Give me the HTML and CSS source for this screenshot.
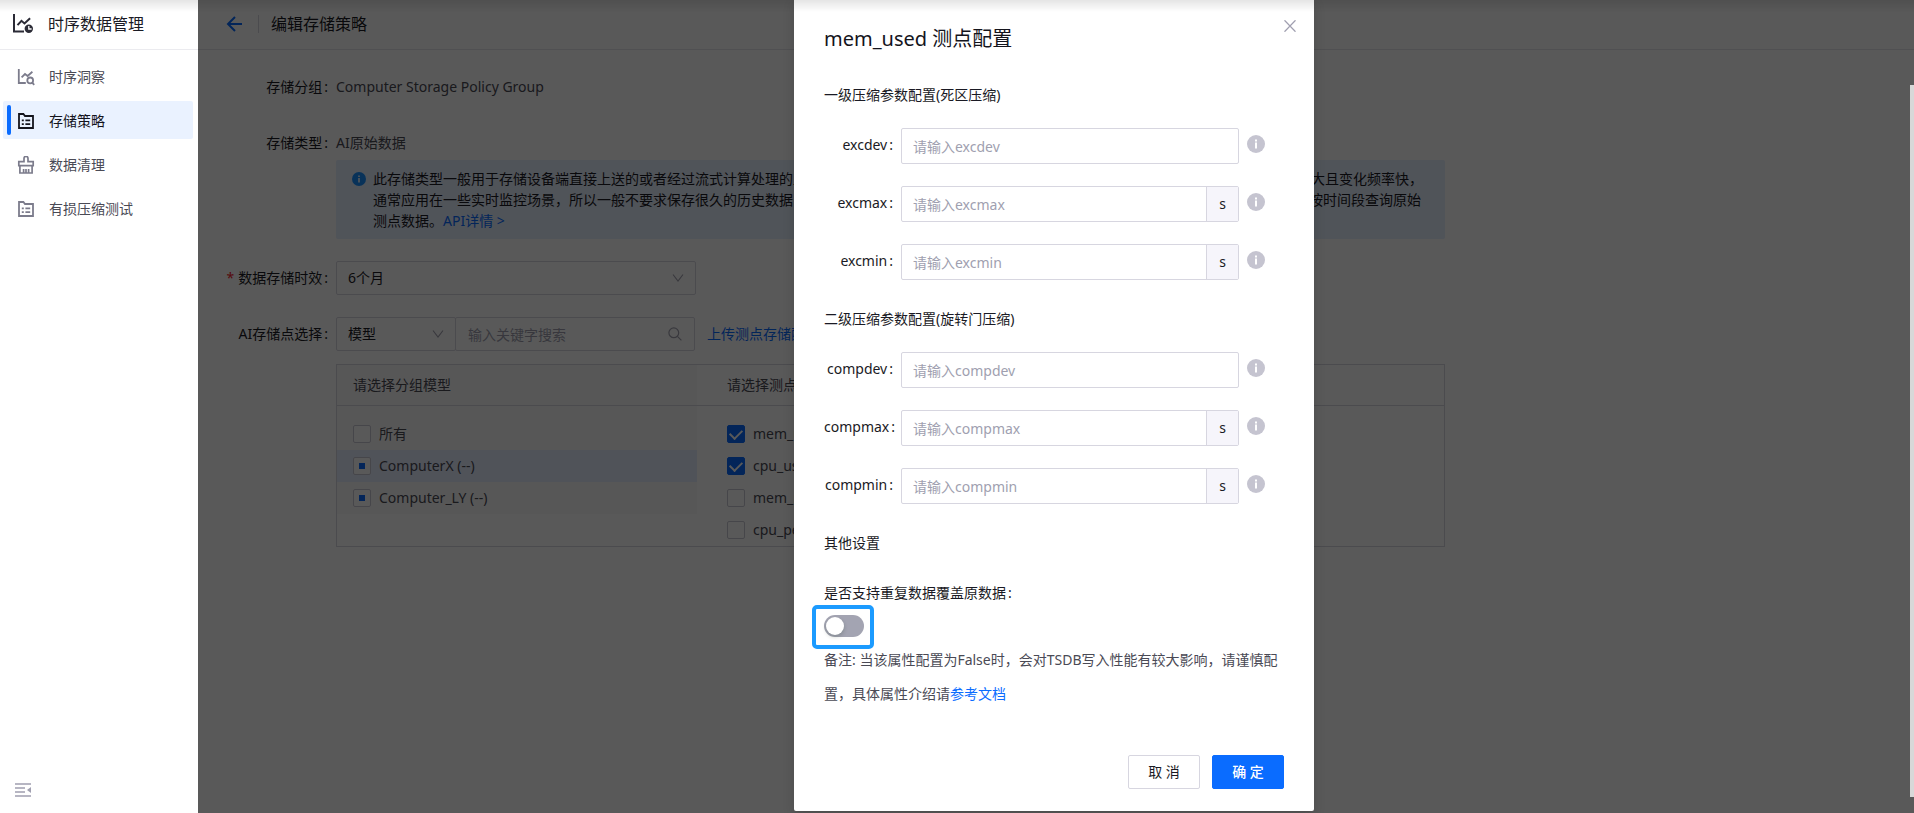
FILE: index.html
```html
<!DOCTYPE html>
<html lang="zh-CN">
<head>
<meta charset="utf-8">
<title>时序数据管理</title>
<link rel="stylesheet" href="styles.css">
</head>
<body>
<svg class="sprite" aria-hidden="true">
  <symbol id="i-info" viewBox="0 0 18 18"><circle cx="9" cy="9" r="9" fill="currentColor"/><path class="info-mark" d="M8 4.6h2v1.9H8zM8 7.6h2v5.8H8z"/></symbol>
  <symbol id="i-down" viewBox="0 0 12 10"><path d="M1 1.5 6 8.2 11 1.5" fill="none" stroke="currentColor" stroke-width="1.1"/></symbol>
  <symbol id="i-list" viewBox="0 0 18 18"><path d="M2 16V2h4.400l1.600 2H16v12z" fill="none" stroke="currentColor" stroke-width="1.8"/><path d="M4.800 7.400h2v1.800h-2zM8.400 7.400h4.800v1.800H8.400zM4.800 11.200h2V13h-2zM8.400 11.200h4.800V13H8.400z" fill="currentColor"/></symbol>
</svg>
<div class="app">
  <aside class="sidebar">
    <header class="brand">
      <svg class="brand-icon" viewBox="0 0 22 22" aria-hidden="true"><path d="M2 1v17.6h10" fill="none" stroke="currentColor" stroke-width="2"/><path d="M5.5 12.2 9.5 7.8l3 2.6 5.6-5.2" fill="none" stroke="currentColor" stroke-width="2"/><circle cx="16.8" cy="15.8" r="4.2" fill="currentColor"/><path d="M16.8 13v3h2.8" fill="none" stroke="#fff" stroke-width="1.3"/></svg>
      <h1 class="brand-title">时序数据管理</h1>
    </header>
    <nav class="menu">
      <a class="menu-item" href="#insight">
        <svg class="menu-icon" viewBox="0 0 18 18" aria-hidden="true"><path d="M1.8 1v14h7" fill="none" stroke="currentColor" stroke-width="1.8"/><path d="M4.6 9.4 8 6l2.6 2 4.8-4.2" fill="none" stroke="currentColor" stroke-width="1.8"/><circle cx="13.2" cy="12.4" r="2.9" fill="none" stroke="currentColor" stroke-width="1.8"/><path d="m15.2 14.6 2 2.2" stroke="currentColor" stroke-width="1.8"/></svg>
        时序洞察</a>
      <a class="menu-item active" href="#policy" aria-current="page">
        <svg class="menu-icon" aria-hidden="true"><use href="#i-list"/></svg>
        存储策略</a>
      <a class="menu-item" href="#clean">
        <svg class="menu-icon" viewBox="0 0 18 18" aria-hidden="true"><path d="M1.800 9.600V5.600h5.200V2.400a2 2 0 0 1 4 0v3.200h5.200v4zM2.900 9.600v7.400h12.200V9.600M6.600 17v-4M9 17v-4M11.600 17v-4" fill="none" stroke="currentColor" stroke-width="1.7"/></svg>
        数据清理</a>
      <a class="menu-item" href="#test">
        <svg class="menu-icon" aria-hidden="true"><use href="#i-list"/></svg>
        有损压缩测试</a>
    </nav>
    <button class="collapse" type="button" aria-label="收起菜单">
      <svg class="collapse-icon" viewBox="0 0 16 14" aria-hidden="true"><path d="M0 1h16M0 5h10M0 9h10M0 13h16" stroke="currentColor" stroke-width="1.700"/><path d="M16 4v6l-4-3z" fill="currentColor"/></svg>
    </button>
  </aside>

  <main class="main">
    <header class="page-head">
      <button class="back" type="button" aria-label="返回"><svg class="back-icon" viewBox="0 0 16 16" aria-hidden="true"><path d="M16 8H2.500M9 1 2 8l7 7" fill="none" stroke="currentColor" stroke-width="2"/></svg></button>
      <h2 class="page-title">编辑存储策略</h2>
    </header>

    <form class="form">
      <div class="row row-text">
        <span class="label">存储分组<span class="colon">:</span></span>
        <span class="value">Computer Storage Policy Group</span>
      </div>
      <div class="row row-type">
        <span class="label">存储类型<span class="colon">:</span></span>
        <span class="value">AI原始数据</span>
      </div>
      <div class="alert">
        <svg class="alert-icon" aria-hidden="true"><use href="#i-info"/></svg>
        <p class="alert-text">此存储类型一般用于存储设备端直接上送的或者经过流式计算处理的监控类测点数据，例如设备运行时的温度、压力和转速等，这类数据的特点是数据量大且变化频率快，通常应用在一些实时监控场景，所以一般不要求保存很久的历史数据，并且需要支持高并发写入，可以通过SQL语句或接口调用的方式，快速高效地完成按时间段查询原始测点数据。<a class="link" href="#api">API详情 &gt;</a></p>
      </div>
      <div class="row row-field">
        <label class="label" for="ttl"><span class="required">*</span>数据存储时效<span class="colon">:</span></label>
        <span class="select-box select-wide"><select class="select" id="ttl"><option>6个月</option></select><svg class="chevron" aria-hidden="true"><use href="#i-down"/></svg></span>
      </div>
      <div class="row row-field">
        <label class="label" for="kind">AI存储点选择<span class="colon">:</span></label>
        <span class="select-box select-narrow"><select class="select" id="kind"><option>模型</option></select><svg class="chevron" aria-hidden="true"><use href="#i-down"/></svg></span>
        <span class="search-box"><input class="search" type="text" placeholder="输入关键字搜索" aria-label="输入关键字搜索"><svg class="search-icon" viewBox="0 0 14 14" aria-hidden="true"><circle cx="5.800" cy="5.800" r="4.900" fill="none" stroke="currentColor" stroke-width="1.200"/><path d="m9.400 9.400 4 4" stroke="currentColor" stroke-width="1.200"/></svg></span>
        <a class="link upload" href="#upload">上传测点存储配置</a>
      </div>
      <div class="picker">
        <div class="picker-head picker-left">请选择分组模型</div>
        <div class="picker-head picker-right">请选择测点</div>
        <div class="picker-list picker-left">
          <label class="check-row"><input class="check" type="checkbox">所有</label>
          <label class="check-row selected"><input class="check partial" type="checkbox">ComputerX (--)</label>
          <label class="check-row"><input class="check partial" type="checkbox">Computer_LY (--)</label>
        </div>
        <div class="picker-list picker-right">
          <label class="check-row"><input class="check" type="checkbox" checked>mem_used</label>
          <label class="check-row"><input class="check" type="checkbox" checked>cpu_used</label>
          <label class="check-row"><input class="check" type="checkbox">mem_percent</label>
          <label class="check-row"><input class="check" type="checkbox">cpu_percent</label>
        </div>
      </div>
    </form>

    <div class="overlay">
      <section class="modal" role="dialog" aria-labelledby="dlg-title">
        <button class="close" type="button" aria-label="关闭"><svg class="close-icon" viewBox="0 0 12 12" aria-hidden="true"><path d="m.5.300 11 11.400M11.500.300.5 11.700" stroke="currentColor" stroke-width="1.300"/></svg></button>
        <h2 class="modal-title" id="dlg-title">mem_used 测点配置</h2>

        <h3 class="section-title first">一级压缩参数配置(死区压缩)</h3>
        <div class="fields">
          <div class="field"><label class="field-label" for="excdev">excdev<span class="field-colon">:</span></label><span class="field-box"><input class="field-input" id="excdev" type="text" placeholder="请输入excdev"></span><svg class="info" aria-hidden="true"><use href="#i-info"/></svg></div>
          <div class="field"><label class="field-label" for="excmax">excmax<span class="field-colon">:</span></label><span class="field-box"><input class="field-input" id="excmax" type="text" placeholder="请输入excmax"><span class="unit">s</span></span><svg class="info" aria-hidden="true"><use href="#i-info"/></svg></div>
          <div class="field"><label class="field-label" for="excmin">excmin<span class="field-colon">:</span></label><span class="field-box"><input class="field-input" id="excmin" type="text" placeholder="请输入excmin"><span class="unit">s</span></span><svg class="info" aria-hidden="true"><use href="#i-info"/></svg></div>
        </div>

        <h3 class="section-title">二级压缩参数配置(旋转门压缩)</h3>
        <div class="fields">
          <div class="field"><label class="field-label" for="compdev">compdev<span class="field-colon">:</span></label><span class="field-box"><input class="field-input" id="compdev" type="text" placeholder="请输入compdev"></span><svg class="info" aria-hidden="true"><use href="#i-info"/></svg></div>
          <div class="field"><label class="field-label" for="compmax">compmax<span class="field-colon">:</span></label><span class="field-box"><input class="field-input" id="compmax" type="text" placeholder="请输入compmax"><span class="unit">s</span></span><svg class="info" aria-hidden="true"><use href="#i-info"/></svg></div>
          <div class="field"><label class="field-label" for="compmin">compmin<span class="field-colon">:</span></label><span class="field-box"><input class="field-input" id="compmin" type="text" placeholder="请输入compmin"><span class="unit">s</span></span><svg class="info" aria-hidden="true"><use href="#i-info"/></svg></div>
        </div>

        <h3 class="section-title">其他设置</h3>
        <label class="switch-label" for="override">是否支持重复数据覆盖原数据<span class="field-colon">:</span></label>
        <div class="switch-box"><input class="switch" id="override" type="checkbox" role="switch"></div>
        <p class="note">备注: 当该属性配置为False时，会对TSDB写入性能有较大影响，请谨慎配置，具体属性介绍请<a class="link" href="#docs">参考文档</a></p>
        <footer class="actions">
          <button class="btn" type="button">取 消</button>
          <button class="btn btn-primary" type="button">确 定</button>
        </footer>
      </section>
    </div>
    <div class="scroll-thumb"></div>
  </main>
</div>
<div class="top-shade"></div>
</body>
</html>
```
FILE: styles.css
```css
* { box-sizing: border-box; }
body {
  margin: 0;
  font: 14px/22px "Noto Sans", "Noto Sans CJK SC", sans-serif;
  color: #1a1a24;
  background: #fff;
}
h1, h2, h3, p { margin: 0; font-weight: 400; }
button, input, select { font: inherit; color: inherit; }
button { cursor: pointer; }
.sprite { position: absolute; width: 0; height: 0; }
.info-mark { fill: #fff; }
.link { color: #0a6cff; text-decoration: none; }
.app { display: flex; min-height: 100vh; }
.top-shade {
  position: fixed;
  inset: 0 0 auto;
  height: 12px;
  background: linear-gradient(rgba(0, 0, 0, .1), rgba(0, 0, 0, 0));
  pointer-events: none;
}

/* Sidebar */
.sidebar { flex: none; display: flex; flex-direction: column; width: 198px; }
.brand {
  display: flex;
  align-items: center;
  gap: 14px;
  height: 50px;
  padding: 0 0 2px 12px;
  border-bottom: 1px solid #ebebef;
}
.brand-icon { width: 22px; height: 22px; color: #2b2b36; }
.brand-title { font-size: 16px; line-height: 24px; }
.menu { display: flex; flex-direction: column; gap: 6px; padding: 7px 5px 0 3px; }
.menu-item {
  position: relative;
  display: flex;
  align-items: center;
  gap: 14px;
  height: 38px;
  padding: 2px 0 0 14px;
  border-radius: 2px;
  color: #4a4a55;
  text-decoration: none;
}
.menu-icon { width: 18px; height: 18px; color: #7c7c8c; }
.menu-item.active { background: #eaf2ff; color: #14141c; }
.menu-item.active .menu-icon { color: #14141c; }
.menu-item.active::before {
  content: "";
  position: absolute;
  inset: 4px auto 4px 4px;
  width: 4px;
  border-radius: 2px;
  background: #0a6cff;
}
.collapse {
  margin: auto 0 16px 15px;
  padding: 0;
  border: 0;
  background: none;
  width: 16px;
  height: 14px;
}
.collapse-icon { display: block; width: 16px; height: 14px; color: #a09fb0; }

/* Page */
.main { position: relative; flex: 1; min-width: 0; }
.page-head {
  display: flex;
  align-items: center;
  height: 50px;
  padding: 0 0 2px 28px;
  border-bottom: 1px solid #e4e4ea;
}
.back { padding: 0; border: 0; background: none; color: #0a6cff; }
.back-icon { display: block; width: 16px; height: 16px; }
.page-title {
  margin-left: 16px;
  padding-left: 12px;
  border-left: 1px solid #d7d7e0;
  font-size: 16px;
  line-height: 18px;
}
.form { padding: 26px 469px 0 0; }
.row { display: flex; align-items: center; }
.row-text { height: 22px; margin-bottom: 34px; }
.row-type { height: 22px; margin-bottom: 6px; }
.row-field { height: 34px; margin-top: 22px; }
.label { flex: none; width: 138px; text-align: right; white-space: nowrap; }
.colon { margin: 0 8px 0 2px; }
.required { margin-right: 4px; color: #f5222d; }
.value { color: #4a4a55; }
.alert {
  display: flex;
  gap: 7px;
  margin-left: 138px;
  padding: 8px 15px 8px 16px;
  background: #e6efff;
  border-radius: 2px;
}
.alert-icon { flex: none; width: 14px; height: 14px; margin-top: 4px; color: #1890ff; }
.alert-text { line-height: 21px; }
.select-box, .search-box { position: relative; flex: none; height: 34px; }
.select-wide { width: 360px; }
.select-narrow { width: 120px; }
.search-box { width: 240px; margin-left: -1px; }
.select, .search {
  width: 100%;
  height: 34px;
  padding: 0 11px;
  border: 1px solid #d7d6e0;
  border-radius: 2px;
  background: #fff;
  appearance: none;
}
.search { padding-left: 12px; }
.search::placeholder, .field-input::placeholder { color: #a09fb0; opacity: 1; }
.chevron { position: absolute; top: 12px; right: 12px; width: 12px; height: 10px; color: #a3a2b0; }
.search-icon { position: absolute; top: 10px; right: 13px; width: 14px; height: 14px; color: #a3a2b0; }
.upload { margin-left: 12px; white-space: nowrap; }
.picker {
  display: grid;
  grid-template-columns: 360px 1fr;
  align-items: start;
  margin: 13px 0 0 138px;
  border: 1px solid #d7d6e0;
}
.picker-head { height: 41px; padding-top: 9px; border-bottom: 1px solid #d7d6e0; color: #4a4a55; }
.picker-left { padding-left: 16px; background: #fafafa; }
.picker-right { padding-left: 30px; }
.picker-list { padding-top: 12px; }
.picker-list.picker-left { padding-left: 0; }
.picker-list.picker-left .check-row { padding-left: 16px; }
.check-row { display: flex; align-items: center; gap: 8px; height: 32px; color: #4a4a55; }
.check-row.selected { background: #e6edff; }
.check {
  display: grid;
  place-items: center;
  width: 18px;
  height: 18px;
  margin: 0;
  border: 1px solid #c9c8d4;
  border-radius: 2px;
  background: #fff;
  appearance: none;
}
.check.partial::before { content: ""; width: 6px; height: 6px; background: #0a6cff; }
.check:checked { border-color: #0a6cff; background: #0a6cff; }
.check:checked::before {
  content: "";
  width: 6px;
  height: 10px;
  margin-bottom: 3px;
  border: solid #fff;
  border-width: 0 2px 2px 0;
  transform: rotate(45deg);
}
.scroll-thumb { position: absolute; inset: 85px 0 16px auto; width: 4px; background: #d8d8d8; }

/* Dialog */
.overlay {
  position: absolute;
  inset: 0;
  display: flex;
  justify-content: center;
  align-items: flex-start;
  padding-right: 4px;
  background: rgba(0, 0, 0, .65);
}
.modal {
  position: relative;
  width: 520px;
  padding: 25px 30px 22px;
  border-radius: 0 0 2px 2px;
  background: #fff;
  box-shadow: 0 4px 12px rgba(0, 0, 0, .15);
}
.close { position: absolute; top: 20px; right: 18px; padding: 0; border: 0; background: none; color: #a09fb0; }
.close-icon { display: block; width: 12px; height: 12px; }
.modal-title { font-size: 20px; line-height: 28px; color: #14141c; }
.section-title { margin: 28px 0 22px; font-size: 14px; line-height: 22px; }
.section-title.first { margin-top: 31px; }
.fields { display: grid; gap: 22px; }
.field { display: grid; grid-template-columns: 77px 1fr 18px; align-items: start; padding-right: 19px; }
.field-label { padding: 6px 8px 0 0; text-align: right; white-space: nowrap; }
.field-colon { margin-left: 2px; }
.field-box { display: flex; margin-right: 8px; border: 1px solid #d7d6e0; border-radius: 2px; }
.field-input { flex: 1; min-width: 0; height: 34px; padding: 0 11px; border: 0; background: none; }
.unit { width: 32px; border-left: 1px solid #d7d6e0; background: #f6f5fb; line-height: 34px; text-align: center; }
.info { width: 18px; height: 18px; margin-top: 7px; color: #c5c4d0; }
.switch-label { display: block; margin-top: 28px; }
.switch-box { position: relative; width: 40px; height: 22px; margin: 11px 0 6px; }
.switch-box::after {
  content: "";
  position: absolute;
  inset: -10px -10px -12px -12px;
  border: 4px solid #1c9bff;
  border-radius: 5px;
  pointer-events: none;
}
.switch {
  display: flex;
  width: 40px;
  height: 22px;
  margin: 0;
  padding: 2px;
  border-radius: 11px;
  background: #a3a4b2;
  appearance: none;
}
.switch::before {
  content: "";
  width: 18px;
  height: 18px;
  border-radius: 9px;
  background: #fff;
  box-shadow: 0 2px 4px rgba(0, 35, 11, .2);
}
.note { line-height: 34px; color: #4a4a55; }
.actions { display: flex; justify-content: flex-end; gap: 12px; margin-top: 44px; }
.btn {
  width: 72px;
  height: 34px;
  padding: 0;
  border: 1px solid #d7d6e0;
  border-radius: 2px;
  background: #fff;
}
.btn-primary { border-color: #0a6cff; background: #0a6cff; color: #fff; font-weight: 500; }
```
